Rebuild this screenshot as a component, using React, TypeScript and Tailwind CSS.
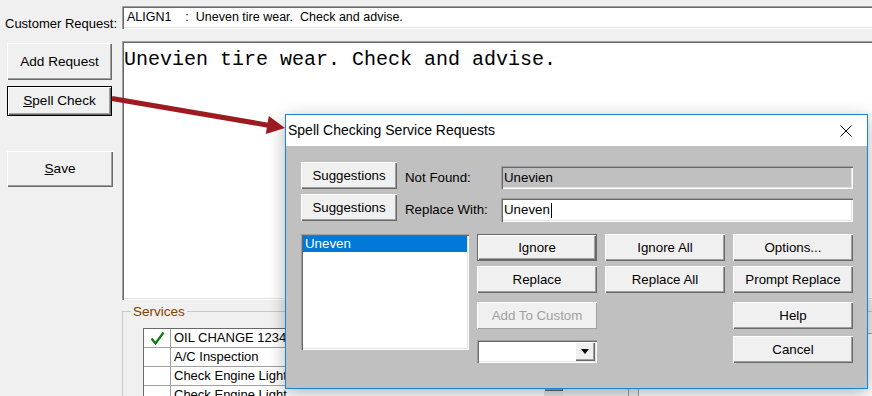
import React from "react";

type BtnProps = {
  children: React.ReactNode;
  className?: string;
  variant?: "normal" | "default" | "focus" | "disabled";
};

// classic raised 3D button
function WinButton({ children, className = "", variant = "normal" }: BtnProps) {
  let look = "text-black shadow-[inset_1px_1px_0_#ffffff,inset_-1px_-1px_0_#696969,inset_-2px_-2px_0_#a0a0a0]";
  if (variant === "default") {
    look = "text-black border border-[#696969] shadow-[inset_1px_1px_0_#ffffff,inset_-1px_-1px_0_#696969,inset_-2px_-2px_0_#a0a0a0]";
  } else if (variant === "focus") {
    look = "text-black border border-black shadow-[inset_1px_1px_0_#ffffff,inset_-1px_-1px_0_#696969,inset_-2px_-2px_0_#a0a0a0]";
  } else if (variant === "disabled") {
    look = "text-[#a0a0a0] shadow-[inset_1px_1px_0_#ffffff,inset_-1px_-1px_0_#a0a0a0]";
  }
  return (
    <div className={`flex shrink-0 items-center justify-center bg-[#f0f0f0] leading-none whitespace-nowrap ${look} ${className}`}>
      {children}
    </div>
  );
}

const sunken =
  "shadow-[inset_1px_1px_0_#a0a0a0,inset_2px_2px_0_#696969,inset_-1px_-1px_0_#ffffff,inset_-2px_-2px_0_#e3e3e3]";

const services = ["OIL CHANGE 1234", "A/C Inspection", "Check Engine Light", "Check Engine Light"];

function SpellDialog() {
  return (
    <div className="absolute left-[285px] top-[114px] z-10 flex h-[275px] w-[583px] flex-col border border-[#1883d7] bg-[#c0c0c0] shadow-[0_4px_16px_rgba(0,0,0,0.3)]">
      {/* title bar */}
      <div className="flex h-[31px] shrink-0 items-center bg-white pl-[2px] pr-[15px]">
        <span className="flex-1 text-[14px] text-black">Spell Checking Service Requests</span>
        <svg width="12" height="12" viewBox="0 0 12 12">
          <path d="M0.5 0.5 L11.5 11.5 M11.5 0.5 L0.5 11.5" stroke="#000" strokeWidth="1" fill="none" />
        </svg>
      </div>

      <div className="flex-1 pl-[15px] pr-[14px] pt-[16px] text-[13.3px]">
        <div className="flex h-[27px]">
          <WinButton className="h-[27px] w-[96px] text-[13.3px]">Suggestions</WinButton>
          <div className="ml-[8px] mt-[4px] flex h-[23px] w-[96px] items-center">Not Found:</div>
          <div className={`mt-[4px] flex h-[23px] flex-1 items-center bg-[#c0c0c0] pl-[3px] ${sunken}`}>Unevien</div>
        </div>
        <div className="mt-[5px] flex h-[27px]">
          <WinButton className="h-[27px] w-[96px] text-[13.3px]">Suggestions</WinButton>
          <div className="ml-[8px] mt-[4px] flex h-[24px] w-[96px] items-center">Replace With:</div>
          <div className={`mt-[4px] flex h-[24px] flex-1 items-center bg-white pl-[3px] ${sunken}`}>
            Uneven
            <span className="ml-[1px] inline-block h-[15px] w-[1px] bg-black" />
          </div>
        </div>

        <div className="mt-[13px] flex gap-[8px]">
          <div className={`h-[116px] w-[168px] bg-white p-[2px] ${sunken}`}>
            <div className="flex h-[16px] items-center bg-[#0078d7] pl-[2px] text-white">Uneven</div>
          </div>
          <div className="flex w-[120px] flex-col">
            <WinButton variant="default" className="h-[27px] text-[13.3px]">Ignore</WinButton>
            <WinButton className="mt-[5px] h-[27px] text-[13.3px]">Replace</WinButton>
            <WinButton variant="disabled" className="mt-[9px] h-[27px] text-[13.3px]">Add To Custom</WinButton>
            <div className={`mt-[11px] flex h-[23px] justify-end bg-white p-[2px] ${sunken}`}>
              <div className="flex w-[20px] items-center justify-center bg-[#f0f0f0] shadow-[inset_1px_1px_0_#ffffff,inset_-1px_-1px_0_#696969,inset_-2px_-2px_0_#a0a0a0]">
                <svg width="8" height="5" viewBox="0 0 8 5">
                  <path d="M0 0 H8 L4 5 Z" fill="#000" />
                </svg>
              </div>
            </div>
          </div>
          <div className="flex w-[120px] flex-col">
            <WinButton className="h-[27px] text-[13.3px]">Ignore All</WinButton>
            <WinButton className="mt-[5px] h-[27px] text-[13.3px]">Replace All</WinButton>
          </div>
          <div className="flex w-[120px] flex-col">
            <WinButton className="h-[27px] text-[13.3px]">Options...</WinButton>
            <WinButton className="mt-[5px] h-[27px] text-[13.3px]">Prompt Replace</WinButton>
            <WinButton className="mt-[9px] h-[27px] text-[13.3px]">Help</WinButton>
            <WinButton className="mt-[7px] h-[27px] text-[13.3px]">Cancel</WinButton>
          </div>
        </div>
      </div>
    </div>
  );
}

export default function App() {
  return (
    <div className="relative h-[396px] w-[872px] overflow-hidden bg-[#f0f0f0] font-['Liberation_Sans',Arial,sans-serif] text-black">
      <div className="flex h-full">
        {/* left column: label + buttons */}
        <div className="flex w-[122px] shrink-0 flex-col pl-[7px]">
          <div className="-ml-[2px] mt-[16px] whitespace-nowrap text-[13px] leading-[15px]">Customer Request:</div>
          <WinButton className="mt-[12px] h-[37px] w-[105px] text-[13.6px]">Add Request</WinButton>
          <WinButton variant="focus" className="mt-[6px] h-[30px] w-[105px] text-[13.6px]">
            <span className="underline">S</span>pell Check
          </WinButton>
          <WinButton className="mt-[35px] h-[36px] w-[106px] text-[13.6px]">
            <span className="underline">S</span>ave
          </WinButton>
        </div>

        {/* right column */}
        <div className="flex w-[760px] shrink-0 flex-col">
          <div className={`mt-[6px] flex h-[23px] shrink-0 items-center whitespace-pre bg-white pl-[5px] text-[12.5px] ${sunken}`}>
            ALIGN1    :  Uneven tire wear.  Check and advise.
          </div>
          <div className={`mt-[12px] h-[259px] shrink-0 bg-white pl-[2px] pt-[8px] font-['Liberation_Mono','Courier_New',monospace] text-[20px] leading-[22px] ${sunken}`}>
            Unevien tire wear. Check and advise.
          </div>

          <fieldset className="mt-[4px] h-[120px] shrink-0 border border-[#c8c8c8]">
            <legend className="ml-[8px] px-[2px] text-[13.5px] leading-[15px] text-[#804000]">Services</legend>
            <div className="mt-[9px] flex pl-[20px]">
              <div className="w-[401px] border-l border-t border-[#696969] bg-white">
                {services.map((s, i) => (
                  <div key={i} className="flex h-[19px] border-b border-[#a0a0a0]">
                    <div className="flex w-[27px] items-center justify-center border-r border-[#a0a0a0]">
                      {i === 0 && (
                        <svg width="15" height="14" viewBox="0 0 15 14">
                          <path d="M1.5 7.5 L5.5 12.5 L13.5 1.5" stroke="#0a7d0a" strokeWidth="2.2" fill="none" />
                        </svg>
                      )}
                    </div>
                    <div className="flex items-center pl-[3px] text-[13px]">{s}</div>
                  </div>
                ))}
              </div>
              <div className="flex w-[19px] flex-col bg-[#e6e6e6]">
                <div className="h-[63px] bg-[#f0f0f0] shadow-[inset_1px_1px_0_#ffffff,inset_-1px_-1px_0_#696969,inset_-2px_-2px_0_#a0a0a0]" />
              </div>
              <div className="ml-[65px] h-[100px] w-[11px] border-x border-[#a0a0a0]" />
              <div className="mt-[5px] h-[100px] flex-1 border-t border-[#a0a0a0] bg-white" />
            </div>
          </fieldset>
        </div>
      </div>

      <SpellDialog />

      {/* red pointer arrow */}
      <svg className="pointer-events-none absolute left-0 top-0 z-20" width="872" height="396" viewBox="0 0 872 396">
        <line x1="112" y1="98.5" x2="268" y2="125.2" stroke="#9d1b20" strokeWidth="5" />
        <polygon points="285,128 265.8,134 268.8,116" fill="#9d1b20" />
      </svg>
    </div>
  );
}
